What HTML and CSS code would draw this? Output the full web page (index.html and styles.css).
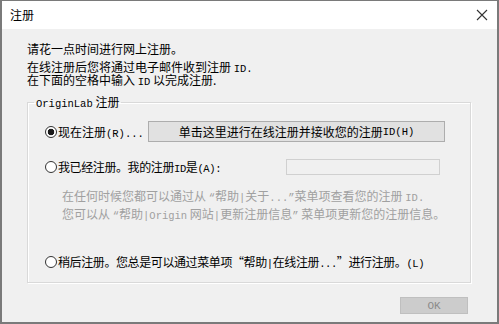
FILE: index.html
```html
<!DOCTYPE html>
<html lang="zh-CN">
<head>
<meta charset="utf-8">
<title>注册</title>
<link rel="stylesheet" href="styles.css">
</head>
<body>
<div class="win">
  <div class="titlebar">
    <span class="title">注册</span>
    <svg class="close" width="12" height="12" viewBox="0 0 12 12"><path d="M1 1 L11 11 M11 1 L1 11" stroke="#333" stroke-width="1.1" fill="none"/></svg>
  </div>
  <div class="content">
    <p class="intro">请花一点时间进行网上注册。</p>
    <p class="info">在线注册后您将通过电子邮件收到注册 <span class="l">ID.</span><br>在下面的空格中输入 <span class="l">ID</span> 以完成注册.</p>
    <fieldset class="group">
      <legend class="legend"><span class="l">OriginLab</span> 注册</legend>
      <div class="row row1">
        <span class="radio checked"></span>
        <span class="label">现在注册<span class="l">(R)...</span></span>
        <span class="btn">单击这里进行在线注册并接收您的注册<span class="l">ID(H)</span></span>
      </div>
      <div class="row row2">
        <span class="radio"></span>
        <span class="label tight">我已经注册。我的注册<span class="l">ID</span>是<span class="l">(A):</span></span>
        <span class="input"></span>
      </div>
      <div class="hint">
        <p>在任何时候您都可以通过从 <span class="l">“</span>帮助<span class="l">|</span>关于<span class="l">...”</span>菜单项查看您的注册 <span class="l">ID.</span></p>
        <p>您可以从 <span class="l">“</span>帮助<span class="l">|Origin</span> 网站<span class="l">|</span>更新注册信息<span class="l">”</span> 菜单项更新您的注册信息。</p>
      </div>
      <div class="row row3">
        <span class="radio"></span>
        <span class="label tight">稍后注册。您总是可以通过菜单项“帮助<span class="l">|</span>在线注册<span class="l">...</span>”进行注册。<span class="l">(L)</span></span>
      </div>
    </fieldset>
    <div class="footer">
      <span class="ok"><span class="l">OK</span></span>
    </div>
  </div>
</div>
</body>
</html>
```

FILE: styles.css
```css
html, body {
  margin: 0;
  padding: 0;
}
body {
  width: 499px;
  height: 324px;
  overflow: hidden;
  font-family: "Noto Sans CJK SC", "Noto Sans", sans-serif;
  font-size: 12px;
  color: #000;
  background: #fff;
}
.win {
  box-sizing: border-box;
  width: 499px;
  height: 324px;
  border-style: solid;
  border-color: #7a7a7a;
  border-width: 1px 2px 2px 2px;
  background: #f0f0f0;
  display: flex;
  flex-direction: column;
}
.titlebar {
  height: 28px;
  flex: none;
  background: #fff;
  display: flex;
  align-items: center;
  justify-content: space-between;
  padding: 0 9px 0 8px;
}
.title {
  line-height: 16px;
}
.content {
  flex: 1;
  display: flex;
  flex-direction: column;
  padding: 12px 26px 0 25px;
}
p {
  margin: 0;
}
.l {
  font-family: "Liberation Mono", monospace;
  font-size: 10.5px;
  line-height: 0;
}
.intro {
  line-height: 16px;
}
.info {
  margin-top: 3px;
  line-height: 13px;
}
.group {
  margin: 10px 0 0 0;
  padding: 0 0 12px 0;
  border: 1px solid #d9d9d9;
  box-shadow: inset 1px 1px 0 #fff, 1px 1px 0 #fff;
  min-width: 0;
}
.legend {
  margin-left: 6px;
  padding: 0 2px;
  line-height: 12px;
  height: 12px;
}
.row {
  display: flex;
  align-items: center;
  padding-left: 17px;
}
.row1 {
  margin-top: 13px;
  height: 21px;
}
.row2 {
  margin-top: 17px;
  height: 16px;
}
.row3 {
  margin-top: 31px;
  height: 16px;
}
.radio {
  box-sizing: border-box;
  width: 12px;
  height: 12px;
  border: 1px solid #333;
  border-radius: 50%;
  background: #fff;
  flex: none;
  margin-right: 1px;
}
.radio.checked {
  background: radial-gradient(circle, #1a1a1a 0 3px, #fff 3.6px);
}
.label {
  flex: 1;
  line-height: 16px;
  white-space: nowrap;
}
.tight {
  letter-spacing: -0.4px;
}
.btn {
  box-sizing: border-box;
  width: 297px;
  height: 21px;
  margin-right: 25px;
  background: #e1e1e1;
  border: 1px solid #adadad;
  display: flex;
  align-items: center;
  justify-content: center;
  line-height: 16px;
}
.input {
  box-sizing: border-box;
  width: 154px;
  height: 16px;
  margin-right: 30px;
  border: 1px solid #d0d0d0;
  background: #f0f0f0;
}
.hint {
  margin-top: 12px;
  padding-left: 34px;
  color: #a0a0a0;
  line-height: 18px;
  white-space: nowrap;
}
.footer {
  display: flex;
  justify-content: flex-end;
  margin-top: 14px;
  padding-right: 3px;
}
.ok {
  box-sizing: border-box;
  width: 68px;
  height: 17px;
  background: #cccccc;
  border: 1px solid #bfbfbf;
  color: #8a8a8a;
  display: flex;
  align-items: center;
  justify-content: center;
}
.ok .l {
  font-size: 11px;
}
```
